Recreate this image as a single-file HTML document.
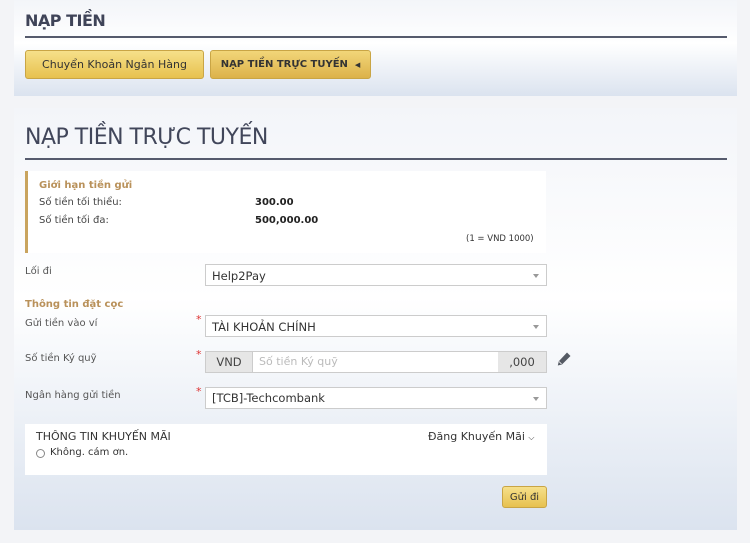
<!DOCTYPE html>
<html><head><meta charset="utf-8"><style>
*{margin:0;padding:0;box-sizing:border-box}
body{width:750px;height:543px;background:#f3f4f7;font-family:"DejaVu Sans","Liberation Sans",sans-serif;position:relative;overflow:hidden;color:#444}
.p{position:absolute;left:14px;width:723px;background:linear-gradient(#f3f5f9,#ffffff 45%,#dbe3ef)}
.a{position:absolute}
.t1{left:25px;top:11px;font-size:16px;font-weight:bold;color:#3f4458;letter-spacing:-0.5px}
.ln{left:25px;width:702px;height:2px;background:#565b6d}
.btn{position:absolute;top:50px;height:29px;border:1px solid #c9a545;border-radius:3px;background:linear-gradient(#f6e08a,#e7c14e);font-size:11px;color:#333;display:flex;align-items:center;justify-content:center}
.lbl{position:absolute;left:25px;font-size:10px;color:#555}
.sel{position:absolute;left:205px;width:342px;height:22px;border:1px solid #ccc;background:#fff;font-size:11.5px;color:#333;padding:4px 6px}
.sel:after{content:"";position:absolute;right:7px;top:9px;border:3px solid transparent;border-top:4px solid #999}
.st{position:absolute;left:196px;color:#d33;font-size:11px}
</style></head><body>
<div class="p" style="top:0;height:96px"></div>
<div class="a t1">NẠP TIỀN</div>
<div class="a ln" style="top:36px"></div>
<div class="btn" style="left:25px;width:179px">Chuyển Khoản Ngân Hàng</div>
<div class="btn" style="left:210px;width:161px;font-weight:bold;font-size:10px;background:linear-gradient(#f2d679,#dcb24a)">NẠP TIỀN TRỰC TUYẾN&nbsp;&nbsp;<span style="font-size:7px">◀</span></div>

<div class="p" style="top:108px;height:422px"></div>
<div class="a" style="left:25px;top:125px;font-size:22px;color:#41465a;letter-spacing:-0.5px">NẠP TIỀN TRỰC TUYẾN</div>
<div class="a ln" style="top:158px"></div>
<div class="a" style="left:25px;top:171px;width:521px;height:82px;background:#fff;border-left:3px solid #c9a45e"></div>
<div class="a" style="left:39px;top:180px;font-size:10px;color:#b9915a;font-weight:bold">Giới hạn tiền gửi</div>
<div class="a" style="left:39px;top:197px;font-size:10px">Số tiền tối thiểu:</div>
<div class="a" style="left:39px;top:215px;font-size:10px">Số tiền tối đa:</div>
<div class="a" style="left:255px;top:197px;font-size:10px;font-weight:bold;color:#222">300.00</div>
<div class="a" style="left:255px;top:215px;font-size:10px;font-weight:bold;color:#222">500,000.00</div>
<div class="a" style="left:466px;top:234px;font-size:8.5px;color:#333">(1 = VND 1000)</div>

<div class="lbl" style="top:266px">Lối đi</div>
<div class="sel" style="top:264px">Help2Pay</div>
<div class="lbl" style="top:299px;color:#b9915a;font-weight:bold">Thông tin đặt cọc</div>
<div class="lbl" style="top:318px">Gửi tiền vào ví</div>
<div class="st" style="top:313px">*</div>
<div class="sel" style="top:315px">TÀI KHOẢN CHÍNH</div>
<div class="lbl" style="top:353px">Số tiền Ký quỹ</div>
<div class="st" style="top:348px">*</div>
<div class="sel" style="top:351px;padding:0"></div>
<div class="a" style="left:206px;top:352px;width:47px;height:20px;background:#e6e6e6;border-right:1px solid #ccc;font-size:11.5px;color:#444;text-align:center;line-height:20px">VND</div>
<div class="a" style="left:259px;top:352px;font-size:11px;color:#bbb;line-height:20px">Số tiền Ký quỹ</div>
<div class="a" style="left:498px;top:352px;width:48px;height:20px;background:#e6e6e6;font-size:11.5px;color:#444;text-align:center;line-height:20px">,000</div>
<svg class="a" style="left:556px;top:351px" width="16" height="16" viewBox="0 0 16 16"><path d="M11 1.5l3.5 3.5-8.5 8.5-4.2 1 1-4.2z" fill="#555a64"/><path d="M3 10.5l2.5 2.5" stroke="#fff" stroke-width=".8"/></svg>
<div class="lbl" style="top:390px">Ngân hàng gửi tiền</div>
<div class="st" style="top:385px">*</div>
<div class="sel" style="top:387px;padding-top:3px">[TCB]-Techcombank</div>

<div class="a" style="left:25px;top:424px;width:522px;height:51px;background:#fff"></div>
<div class="a" style="left:36px;top:430px;font-size:11px;color:#333">THÔNG TIN KHUYẾN MÃI</div>
<div class="a" style="left:428px;top:430px;font-size:11px;color:#333">Đăng Khuyến Mãi <span style="font-size:8px">⌵</span></div>
<div class="a" style="left:36px;top:449px;width:9px;height:9px;border:1px solid #888;border-radius:50%"></div>
<div class="a" style="left:50px;top:447px;font-size:10px;color:#333">Không. cám ơn.</div>
<div class="btn" style="left:502px;top:486px;width:45px;height:22px;font-size:10px">Gửi đi</div>
</body></html>
